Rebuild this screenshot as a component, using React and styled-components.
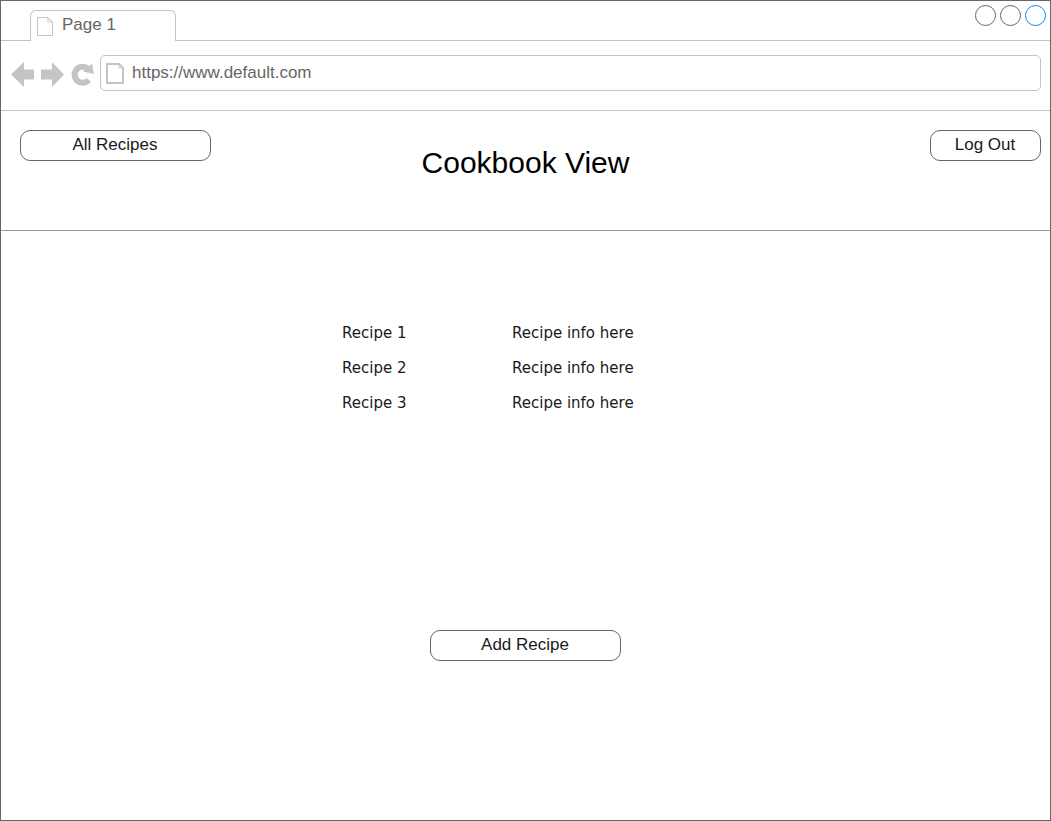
import React from "react";
import styled, { createGlobalStyle } from "styled-components";

const GlobalStyle = createGlobalStyle`
  *, *::before, *::after { box-sizing: border-box; }
  body {
    margin: 0;
    background: #fff;
    color: #1a1a1a;
    font-family: "Liberation Sans", Arial, sans-serif;
    font-size: 17px;
    line-height: 20px;
  }
`;

const Frame = styled.div`
  display: flex;
  flex-direction: column;
  min-height: 100vh;
  border: 1px solid #666;
`;

const TabBar = styled.div`
  display: flex;
  justify-content: space-between;
  height: 40px;
  padding: 0 4px 0 29px;
  border-bottom: 1px solid #c4c4c4;
`;

const Tab = styled.div`
  display: flex;
  align-items: flex-start;
  gap: 9px;
  width: 146px;
  height: 31px;
  margin-top: 9px;
  padding: 4px 6px 0;
  border: 1px solid #c4c4c4;
  border-bottom: 0;
  border-radius: 6px 6px 0 0;
  background: #fff;
  color: #666;

  svg { margin-top: 2px; }
`;

const WindowControls = styled.div`
  display: flex;
  gap: 4px;
  padding-top: 4px;
`;

const WindowButton = styled.button`
  width: 21px;
  height: 21px;
  padding: 0;
  border: 1px solid ${(p) => (p.$active ? "#008cff" : "#666")};
  border-radius: 50%;
  background: #fff;
`;

const Toolbar = styled.div`
  display: flex;
  align-items: flex-start;
  gap: 6px;
  height: 70px;
  padding: 14px 9px 0;
  border-bottom: 1px solid #c4c4c4;
`;

const NavButton = styled.button`
  display: flex;
  align-items: center;
  height: 38px;
  padding: 0;
  border: 0;
  background: none;
`;

const AddressBar = styled.label`
  display: flex;
  flex: 1;
  align-items: center;
  gap: 8px;
  height: 36px;
  padding: 0 5px;
  border: 1px solid #c4c4c4;
  border-radius: 5px;
`;

const AddressInput = styled.input`
  flex: 1;
  min-width: 0;
  height: 32px;
  padding: 0;
  border: 0;
  outline: 0;
  background: none;
  color: #666;
  font: inherit;
`;

const Header = styled.header`
  display: grid;
  grid-template-columns: 1fr auto 1fr;
  align-items: start;
  height: 120px;
  padding: 19px 9px 0;
  border-bottom: 1px solid #999;
`;

const HeaderStart = styled.div`
  padding-left: 10px;
`;

const HeaderEnd = styled.div`
  justify-self: end;
`;

const Title = styled.h1`
  margin: 15px 0 0;
  color: #000;
  font-size: 30px;
  font-weight: 400;
  line-height: 36px;
`;

const Button = styled.button`
  width: ${(p) => (p.$compact ? "111px" : "191px")};
  height: 31px;
  padding: 0 1px 2px 0;
  border: 1px solid #666;
  border-radius: 10px;
  background: #fff;
  color: #1a1a1a;
  font: inherit;
`;

const Main = styled.main`
  display: flex;
  flex: 1;
  flex-direction: column;
  align-items: center;
  gap: 210px;
  padding: 84px 20px 40px;
`;

const RecipeTable = styled.table`
  width: 367px;
  border-collapse: collapse;
  table-layout: fixed;
  font-family: Verdana, "DejaVu Sans", sans-serif;
  font-size: 15px;
`;

const RecipeCell = styled.td`
  width: ${(p) => (p.$name ? "170px" : "auto")};
  height: 35px;
  padding: 0;
`;

const PageIcon = ({ width, height, stroke }) => {
  const s = stroke / 2;
  const fold = 5;
  return (
    <svg width={width} height={height} fill="none" stroke="#c4c4c4" strokeWidth={stroke} aria-hidden="true">
      <path fill="#e6e6e6" stroke="none" d={`M${width - fold - 1} ${s}V${fold + 1}H${width - s}V${fold}L${width - fold} ${s}Z`} />
      <path d={`M${s} ${s}H${width - fold}L${width - s} ${fold}V${height - s}H${s}Z`} />
    </svg>
  );
};

const recipes = [
  { name: "Recipe 1", info: "Recipe info here" },
  { name: "Recipe 2", info: "Recipe info here" },
  { name: "Recipe 3", info: "Recipe info here" },
];

export default function App() {
  return (
    <>
      <GlobalStyle />
      <Frame>
        <TabBar>
          <Tab>
            <PageIcon width={16} height={19} stroke={1} />
            Page 1
          </Tab>
          <WindowControls>
            <WindowButton aria-label="Minimize" />
            <WindowButton aria-label="Maximize" />
            <WindowButton aria-label="Close" $active />
          </WindowControls>
        </TabBar>
        <Toolbar>
          <NavButton aria-label="Back">
            <svg width="24" height="26" fill="#c4c4c4">
              <path d="M1 13.5L14 1V8.5H24V18.5H14V26Z" />
            </svg>
          </NavButton>
          <NavButton aria-label="Forward">
            <svg width="24" height="26" fill="#c4c4c4">
              <path d="M24 13.5L12 1V8.5H1V18.5H12V26Z" />
            </svg>
          </NavButton>
          <NavButton aria-label="Reload">
            <svg width="24" height="26" fill="none">
              <path stroke="#c4c4c4" strokeWidth="6" d="M18.5 8.3A8 8 0 1 0 18.8 18.8" />
              <path fill="#c4c4c4" d="M22 2.5L24 13L13 10.5Z" />
            </svg>
          </NavButton>
          <AddressBar>
            <PageIcon width={18} height={21} stroke={2} />
            <AddressInput type="text" aria-label="Address" defaultValue="https://www.default.com" />
          </AddressBar>
        </Toolbar>
        <Header>
          <HeaderStart>
            <Button type="button">All Recipes</Button>
          </HeaderStart>
          <Title>Cookbook View</Title>
          <HeaderEnd>
            <Button type="button" $compact>Log Out</Button>
          </HeaderEnd>
        </Header>
        <Main>
          <RecipeTable>
            <tbody>
              {recipes.map((recipe) => (
                <tr key={recipe.name}>
                  <RecipeCell $name>{recipe.name}</RecipeCell>
                  <RecipeCell>{recipe.info}</RecipeCell>
                </tr>
              ))}
            </tbody>
          </RecipeTable>
          <Button type="button">Add Recipe</Button>
        </Main>
      </Frame>
    </>
  );
}
